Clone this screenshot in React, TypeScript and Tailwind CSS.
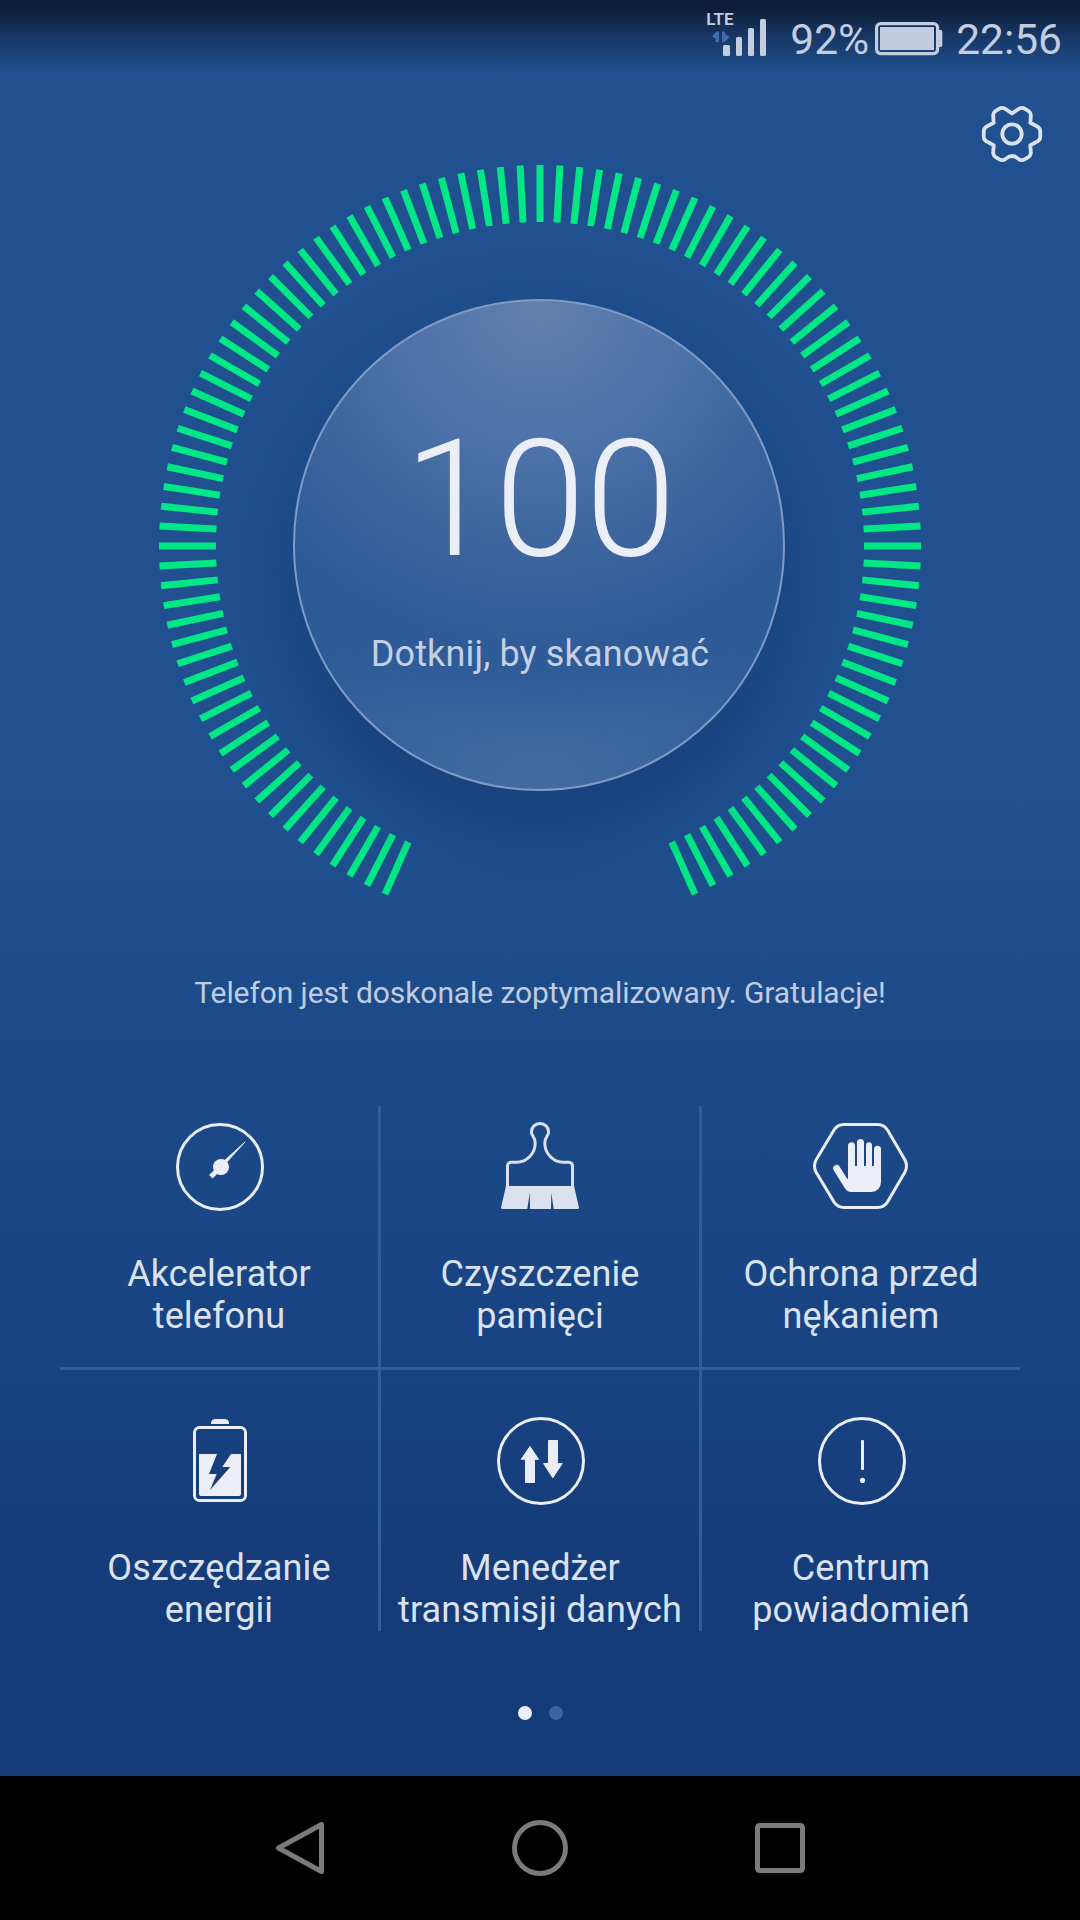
import type { ReactNode } from 'react'

type Tool = {
  id: string
  lines: [string, string]
  icon: ReactNode
}

const TICK_COUNT = 105
const TICK_STEP = 3

function SpeedIcon() {
  return (
    <svg viewBox="0 0 96 96" className="size-24">
      <circle cx="49" cy="48" r="42.5" fill="none" stroke="currentColor" strokeWidth="3" />
      <path d="M74.2 22.8 L51.2 48.2 L48.8 45.8 Z" fill="currentColor" stroke="currentColor" strokeWidth="0.8" />
      <path d="M49 49 L39.8 57.8" stroke="currentColor" strokeWidth="5" />
      <circle cx="50" cy="48" r="8" fill="currentColor" />
    </svg>
  )
}

function BrushIcon() {
  return (
    <svg viewBox="0 0 96 96" className="size-24 text-[#dbe2ef]">
      <path
        d="M15.5 68 V47 Q15.5 43.5 19.5 43.3 H24.5 C35 43.3 43.2 34.5 43.2 24 C43.2 17.5 39.4 17 39.4 13 A8.6 8.6 0 0 1 56.6 13 C56.6 17 52.8 17.5 52.8 24 C52.8 34.5 61 43.3 71.5 43.3 H76.5 Q80.5 43.5 80.5 47 V68"
        fill="none"
        stroke="currentColor"
        strokeWidth="3"
      />
      <path
        d="M14 67 H82 L87 88.5 Q87 90 85.5 90 H61.7 L59.3 73.7 L59 90 H38 L37.7 73.7 L35.3 90 H10.5 Q9 90 9 88.5 Z"
        fill="currentColor"
      />
    </svg>
  )
}

function HandIcon() {
  return (
    <svg viewBox="0 0 96 96" className="size-24">
      <path
        d="M31 5.5 H64.5 Q71 5.5 74.5 11 L92 41 Q95 47 92 53 L74.5 83 Q71 88.5 64.5 88.5 H31 Q24.5 88.5 21 83 L3 53 Q0 47 3 41 L21 11 Q24.5 5.5 31 5.5 Z"
        fill="none"
        stroke="currentColor"
        strokeWidth="3"
      />
      <path
        d="M35 60 V26.8 A3.5 3.5 0 0 1 42 26.8 V47 H44 V23.5 A3.5 3.5 0 0 1 51 23.5 V47 H53 V26.3 A3 3 0 0 1 59 26.3 V47 H61 V30.2 A3.5 3.5 0 0 1 68 30.2 V63 Q67.5 72.5 58 73 H38 Q34.5 73 32 69.5 L20.5 51 A3.5 3.5 0 0 1 26.4 47.3 L34 59.5 Z"
        fill="currentColor"
      />
    </svg>
  )
}

function PowerIcon() {
  return (
    <svg viewBox="0 0 96 96" className="size-24">
      <path d="M40 11 V10 Q40.5 6 44.5 6 H53.5 Q57.5 6 58 10 V11 Z" fill="currentColor" />
      <rect x="23.5" y="14.5" width="51" height="73" rx="5" fill="none" stroke="currentColor" strokeWidth="3" />
      <path
        d="M28 41 H46 L38 61 H45.7 L39 77 L59.3 54 H51.3 L60 41 H70 V81 Q70 83 68 83 H30 Q28 83 28 81 Z"
        fill="currentColor"
      />
    </svg>
  )
}

function TrafficIcon() {
  return (
    <svg viewBox="0 0 96 96" className="size-24">
      <circle cx="49" cy="48" r="42.5" fill="none" stroke="currentColor" strokeWidth="3" />
      <g fill="currentColor" stroke="currentColor" strokeWidth="1" strokeLinejoin="round">
        <path d="M38 33.5 L46.5 46.3 H42.5 V69.5 H33.5 V46.3 H29.2 Z" />
        <path d="M60.8 64.8 L51.5 50.5 H56.5 V27.5 H65.5 V50.5 H70.2 Z" />
      </g>
    </svg>
  )
}

function NoticeIcon() {
  return (
    <svg viewBox="0 0 96 96" className="size-24">
      <circle cx="49" cy="48" r="42.5" fill="none" stroke="currentColor" strokeWidth="3" />
      <rect x="48" y="27" width="3" height="30" rx="1" fill="currentColor" />
      <circle cx="49.5" cy="67.4" r="2.6" fill="currentColor" />
    </svg>
  )
}

const tools: Tool[] = [
  { id: 'speed', lines: ['Akcelerator', 'telefonu'], icon: <SpeedIcon /> },
  { id: 'clean', lines: ['Czyszczenie', 'pamięci'], icon: <BrushIcon /> },
  { id: 'block', lines: ['Ochrona przed', 'nękaniem'], icon: <HandIcon /> },
  { id: 'power', lines: ['Oszczędzanie', 'energii'], icon: <PowerIcon /> },
  { id: 'data', lines: ['Menedżer', 'transmisji danych'], icon: <TrafficIcon /> },
  { id: 'notice', lines: ['Centrum', 'powiadomień'], icon: <NoticeIcon /> },
]

function StatusBar() {
  return (
    <header className="flex h-[72px] items-start justify-end bg-linear-to-b from-[#0e1e38] from-13% via-[#173765] via-50% to-[#20508f] pr-[18px] text-[#c2cde0]">
      <div className="flex w-[61px] flex-col pt-[9px]">
        <span className="h-[17px] text-[17px] leading-[20px] font-semibold">LTE</span>
        <svg viewBox="-1 0 61 40" className="-mt-[9px] h-10 w-[61px]">
          <path d="M5 19.5 L9.5 14.5 H12 V25 H8.5 V21.5 Z M15 14.5 H18 V17 L22.5 19.5 L18 25 H15 Z" fill="#3f6ba8" />
          <g fill="currentColor">
            <rect x="16" y="28" width="7" height="11" rx="1.5" />
            <rect x="29" y="20" width="6" height="19" rx="1.5" />
            <rect x="41" y="11" width="6" height="28" rx="1.5" />
            <rect x="53" y="2" width="6" height="37" rx="1.5" />
          </g>
        </svg>
      </div>
      <span className="ml-[23px] pt-[15px] text-[42.5px] leading-[50px]">92%</span>
      <svg viewBox="0 0 68 34" className="mt-[22px] ml-1.5 h-[34px] w-[68px]">
        <rect x="1.6" y="1.6" width="61" height="30" rx="4" fill="none" stroke="currentColor" strokeWidth="3.2" />
        <path d="M5 5 H59 V28 H5 Z M64 8 H66 Q67.3 8 67.3 10 V23 Q67.3 25 66 25 H64 Z" fill="currentColor" />
      </svg>
      <span className="ml-[13px] pt-[15px] text-[42.5px] leading-[50px]">22:56</span>
    </header>
  )
}

function SettingsButton() {
  return (
    <button type="button" aria-label="Ustawienia" className="size-16 text-[#dbe2ef]">
      <svg viewBox="0 0 64 64" fill="none" stroke="currentColor" strokeWidth="3.8" strokeLinejoin="round">
        <path d="M32 11.3 L38.5 7 Q41.5 4.8 45 6.8 L48.5 9 Q51.2 11 50.8 14 L50.3 20.8 L57.5 24.6 Q60.2 26.3 60.2 29 V35 Q60.2 37.7 57.5 39.4 L50.3 43.2 L50.8 50 Q51.2 53 48.5 55 L45 57.2 Q41.5 59.2 38.5 57 Q32 50.8 25.5 57 Q22.5 59.2 19 57.2 L15.5 55 Q12.8 53 13.2 50 L13.7 43.2 L6.5 39.4 Q3.8 37.7 3.8 35 V29 Q3.8 26.3 6.5 24.6 L13.7 20.8 L13.2 14 Q12.8 11 15.5 9 L19 6.8 Q22.5 4.8 25.5 7 Z" />
        <circle cx="32" cy="32" r="9.7" />
      </svg>
    </button>
  )
}

function Gauge() {
  const ticks = Array.from({ length: TICK_COUNT }, (_, i) => (i - (TICK_COUNT - 1) / 2) * TICK_STEP)

  return (
    <div className="grid size-[764px] place-items-center">
      <svg viewBox="-382 -382 764 764" className="col-start-1 row-start-1 size-[764px]">
        {ticks.map((angle) => (
          <rect key={angle} x="-3.5" y="-381" width="7" height="57" fill="#00e785" transform={`rotate(${angle})`} />
        ))}
      </svg>
      <button
        type="button"
        className="col-start-1 row-start-1 mr-0.5 mb-0.5 flex size-[492px] flex-col items-center rounded-full border-2 border-[#7f9ac4] bg-[radial-gradient(circle_at_50%_0%,#6280ae_0%,#4c72a9_28%,#40699f_40%,#365f9b_55%,#2d5b97_66%,transparent_82%),radial-gradient(circle_at_50%_100%,#446b9f_0%,#3d679f_18%,#335f9a_38%,#2b5a96_56%)] pl-0.5 shadow-[0_36px_70px_0_rgba(20,56,112,0.65)]"
      >
        <span className="mt-[103px] text-[163.5px] leading-[190px] font-light text-[#ebeef6]">100</span>
        <span className="mt-[39px] text-[36px] leading-[42px] tracking-[0.14px] text-[#c5d0e3]">
          Dotknij, by skanować
        </span>
      </button>
    </div>
  )
}

function ToolCell({ tool, className }: { tool: Tool; className: string }) {
  return (
    <button type="button" className={`flex flex-col items-center text-[#ebeef6] ${className}`}>
      {tool.icon}
      <span className="mt-[38px] text-center text-[36px] leading-[42px] tracking-[0.12px] whitespace-nowrap text-[#dbe2ef]">
        {tool.lines[0]}
        <br />
        {tool.lines[1]}
      </span>
    </button>
  )
}

function ToolRow({ items, cellClass }: { items: Tool[]; cellClass: string }) {
  return (
    <div className="grid h-[261px] grid-cols-[318px_3px_318px_3px_318px]">
      <ToolCell tool={items[0]} className={cellClass} />
      <div className="bg-[#315d99]" />
      <ToolCell tool={items[1]} className={cellClass} />
      <div className="bg-[#315d99]" />
      <ToolCell tool={items[2]} className={cellClass} />
    </div>
  )
}

function NavBar() {
  return (
    <nav className="flex h-36 items-center justify-center gap-[180px] bg-black text-[#7b7b7b]">
      <svg viewBox="0 0 60 60" className="size-[60px]" fill="none" stroke="currentColor" strokeWidth="5" strokeLinejoin="round">
        <path d="M51.5 6.5 V53.5 L8.5 30 Z" />
      </svg>
      <svg viewBox="0 0 60 60" className="size-[60px]" fill="none" stroke="currentColor" strokeWidth="5">
        <circle cx="30" cy="30" r="25.5" />
      </svg>
      <svg viewBox="0 0 60 60" className="size-[60px]" fill="none" stroke="currentColor" strokeWidth="5">
        <rect x="7.5" y="7.5" width="45" height="45" rx="2" />
      </svg>
    </nav>
  )
}

export default function App() {
  return (
    <div className="flex h-[1920px] w-[1080px] flex-col overflow-hidden bg-black font-['Roboto',sans-serif]">
      <main className="flex h-[1776px] flex-col items-center bg-linear-to-b from-[#20508f] from-45% via-[#1a4685] via-70% to-[#153a78] to-92%">
        <div className="w-full">
          <StatusBar />
        </div>
        <div className="flex h-[92px] w-full justify-end pt-[30px] pr-9">
          <SettingsButton />
        </div>
        <Gauge />
        <p className="mt-[47px] text-[30px] leading-9 tracking-[-0.09px] text-[#bfcce1]">
          Telefon jest doskonale zoptymalizowany. Gratulacje!
        </p>
        <section className="mt-[95px] w-[960px]">
          <ToolRow items={tools.slice(0, 3)} cellClass="pt-[13px]" />
          <div className="h-[3px] bg-[#315d99]" />
          <ToolRow items={tools.slice(3)} cellClass="pt-[43px]" />
        </section>
        <div className="mt-[75px] flex gap-[17px]">
          <span className="size-3.5 rounded-full bg-[#ebeef6]" />
          <span className="size-3.5 rounded-full bg-[#38639e]" />
        </div>
      </main>
      <NavBar />
    </div>
  )
}
